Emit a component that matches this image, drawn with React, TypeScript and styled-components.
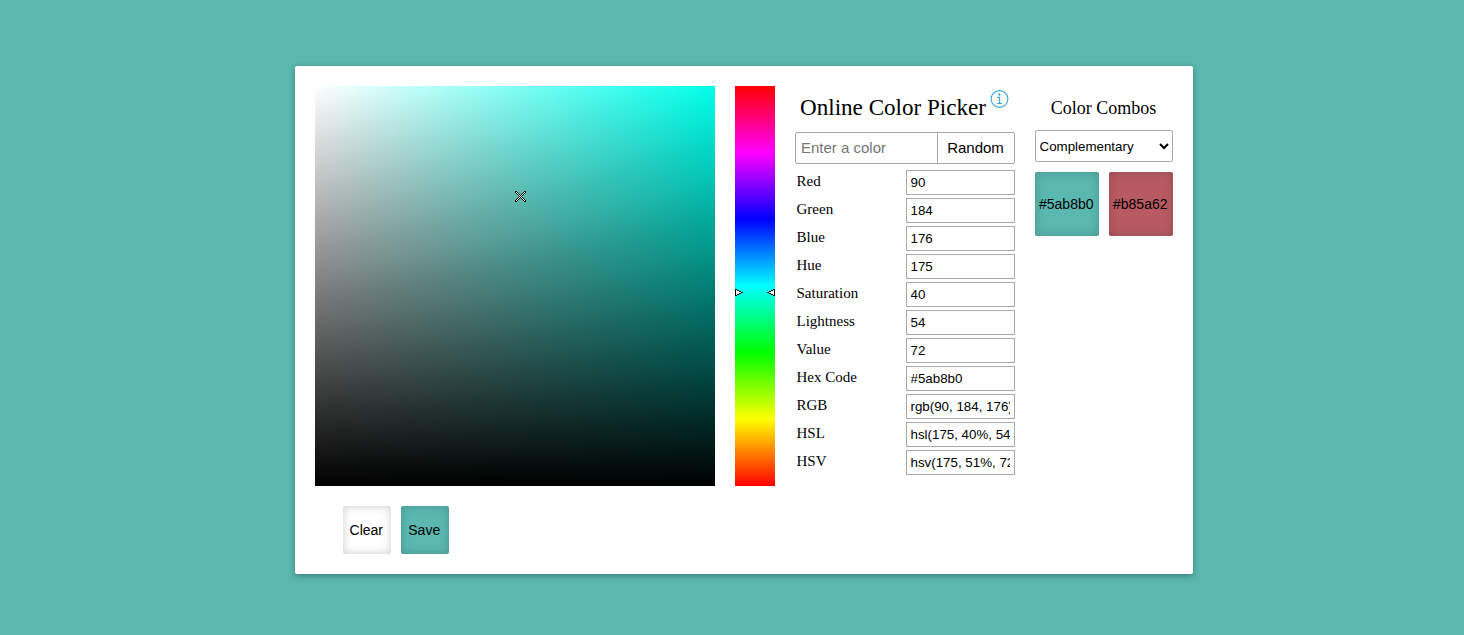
import React from "react";
import styled, { createGlobalStyle } from "styled-components";

const GlobalStyle = createGlobalStyle`
  * { box-sizing: border-box; }
  html, body { margin: 0; background: #5ab8b0; }
  body { font-family: "Liberation Serif", "Times New Roman", serif; color: #000; overflow: hidden; }
  input, button, select { font-family: "Liberation Sans", Arial, sans-serif; color: #000; margin: 0; outline: none; }
`;

const Page = styled.main`
  height: 635px;
  padding: 66px 0 0 295px;
`;

const Card = styled.section`
  width: 898px;
  height: 508px;
  padding: 20px;
  background: #fff;
  border-radius: 2px;
  box-shadow: 0 2px 6px rgba(0, 0, 0, 0.33);
`;

const Columns = styled.div`
  display: flex;
  gap: 20px;
  height: 400px;
`;

const Field = styled.div`
  position: relative;
  width: 400px;
  height: 400px;
  background: linear-gradient(to bottom, transparent, #000), linear-gradient(to right, #fff, #00ffea);
`;

const Cross = styled.svg`
  position: absolute;
  left: 200px;
  top: 105px;
`;

const Hue = styled.div`
  position: relative;
  width: 40px;
  height: 400px;
  background: linear-gradient(to bottom, #f00, #f0f, #00f, #0ff, #0f0, #ff0, #f00);
`;

const HueMarks = styled.svg`
  position: absolute;
  left: 0;
  top: 203px;
`;

const Details = styled.div`
  width: 220px;
`;

const Heading = styled.div`
  display: flex;
  height: 46px;
  padding: 4px 6px 0 5px;
  justify-content: space-between;
`;

const Title = styled.h1`
  margin: 0;
  padding-top: 4px;
  font-size: 23.1px;
  line-height: 27px;
  font-weight: 400;
  white-space: nowrap;
`;

const InfoIcon = styled.svg`
  flex: none;
`;

const Entry = styled.div`
  display: flex;
  height: 32px;
  margin-bottom: 6px;
  border: 1px solid #a9a9a9;
  border-radius: 2px;
`;

const ColorInput = styled.input`
  width: 142px;
  padding: 0 5px 2px;
  border: 0;
  border-right: 1px solid #a9a9a9;
  background: transparent;
  font-size: 15px;
  &::placeholder { color: #757575; }
`;

const RandomButton = styled.button`
  flex: 1;
  padding: 0 1px 2px 0;
  border: 0;
  background: transparent;
  font-size: 15px;
`;

const Row = styled.label`
  display: flex;
  justify-content: space-between;
  height: 25px;
  margin-bottom: 3px;
  padding-left: 1.5px;
  font-size: 15px;
  line-height: 23px;
`;

const ValueInput = styled.input`
  width: 109px;
  height: 25px;
  padding: 0 4px 0 3.5px;
  border: 1px solid #a9a9a9;
  background: #fff;
  font-size: 13.333px;
`;

const Combos = styled.div`
  width: 138px;
`;

const CombosTitle = styled.h2`
  height: 44px;
  margin: 0;
  padding: 12px 1px 0 0;
  font-size: 18px;
  line-height: 21px;
  font-weight: 400;
  text-align: center;
`;

const SelectBox = styled.div`
  position: relative;
  height: 32px;
  margin-bottom: 10px;
`;

const Select = styled.select`
  width: 100%;
  height: 100%;
  padding: 0 3.5px;
  appearance: none;
  border: 1px solid #a9a9a9;
  border-radius: 2px;
  background: #fff;
  font-size: 13.333px;
`;

const Chevron = styled.svg`
  position: absolute;
  right: 4px;
  top: 13px;
  pointer-events: none;
`;

const Swatches = styled.div`
  display: flex;
  gap: 10px;
`;

const Swatch = styled.button<{ $size: number; $color: string }>`
  width: ${(p) => p.$size}px;
  height: ${(p) => p.$size}px;
  padding: 0 1.5px 0 0;
  border: 0;
  border-radius: 2px;
  background: ${(p) => p.$color};
  box-shadow: inset 0 0 10px rgba(0, 0, 0, 0.2);
  font-size: 14px;
`;

const Actions = styled(Swatches)`
  padding: 20px 0 0 28px;
`;

const values: [string, string][] = [
  ["Red", "90"],
  ["Green", "184"],
  ["Blue", "176"],
  ["Hue", "175"],
  ["Saturation", "40"],
  ["Lightness", "54"],
  ["Value", "72"],
  ["Hex Code", "#5ab8b0"],
  ["RGB", "rgb(90, 184, 176)"],
  ["HSL", "hsl(175, 40%, 54%)"],
  ["HSV", "hsv(175, 51%, 72%)"],
];

// White diagonals with a black pixel outline and black tips.
const crossPixels = Array.from({ length: 11 }, (_, y) =>
  Array.from({ length: 11 }, (_, x) => ({ x, y }))
)
  .flat()
  .filter(({ x, y }) => Math.abs(x - y) <= 1 || Math.abs(x + y - 10) <= 1);

const crossFill = (x: number, y: number) =>
  (x + y) % 2 || ((x === 0 || x === 10) && (y === 0 || y === 10)) ? "#000" : "#fff";

export default function App() {
  return (
    <Page>
      <GlobalStyle />
      <Card>
        <Columns>
          <Field>
            <Cross width="11" height="11" shapeRendering="crispEdges">
              {crossPixels.map(({ x, y }) => (
                <rect key={`${x}-${y}`} x={x} y={y} width="1" height="1" fill={crossFill(x, y)} />
              ))}
            </Cross>
          </Field>
          <Hue>
            <HueMarks width="40" height="8" shapeRendering="crispEdges">
              <path d="M0 0H2V1H4V2H6V3H8V4H6V5H4V6H2V7H0Z" fill="#000" />
              <path d="M1 1H2V2H4V3H6V4H4V5H2V6H1Z" fill="#fff" />
              <path d="M40 0H38V1H36V2H34V3H32V4H34V5H36V6H38V7H40Z" fill="#000" />
              <path d="M39 1H38V2H36V3H34V4H36V5H38V6H39Z" fill="#fff" />
            </HueMarks>
          </Hue>
          <Details>
            <Heading>
              <Title>Online Color Picker</Title>
              <InfoIcon width="19" height="19" viewBox="0 0 19 19" fill="none" stroke="#35a5dc">
                <circle cx="9.5" cy="9" r="8.4" strokeWidth="1.1" />
                <circle cx="9.3" cy="4.5" r="1.15" fill="#35a5dc" stroke="none" />
                <path d="M7.3 7.4H9.6V13.4M7 13.5H12" strokeWidth="1.2" />
              </InfoIcon>
            </Heading>
            <Entry>
              <ColorInput placeholder="Enter a color" />
              <RandomButton>Random</RandomButton>
            </Entry>
            {values.map(([name, value]) => (
              <Row key={name}>
                {name}
                <ValueInput defaultValue={value} />
              </Row>
            ))}
          </Details>
          <Combos>
            <CombosTitle>Color Combos</CombosTitle>
            <SelectBox>
              <Select>
                <option>Complementary</option>
              </Select>
              <Chevron width="10" height="7" fill="none" stroke="#000" strokeWidth="2">
                <path d="M1 1L5 5L9 1" />
              </Chevron>
            </SelectBox>
            <Swatches>
              <Swatch $size={64} $color="#5ab8b0">#5ab8b0</Swatch>
              <Swatch $size={64} $color="#b85a62">#b85a62</Swatch>
            </Swatches>
          </Combos>
        </Columns>
        <Actions>
          <Swatch $size={48} $color="#fff">Clear</Swatch>
          <Swatch $size={48} $color="#5ab8b0">Save</Swatch>
        </Actions>
      </Card>
    </Page>
  );
}
